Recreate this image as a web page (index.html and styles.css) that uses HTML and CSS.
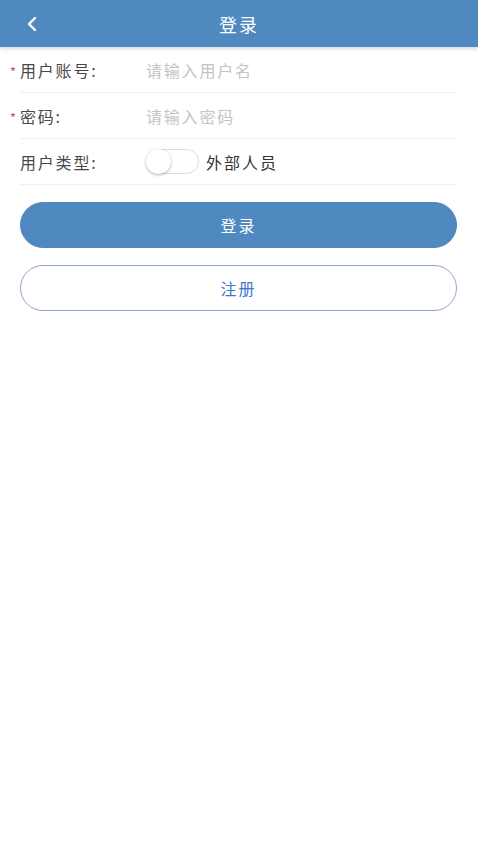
FILE: index.html
```html
<!DOCTYPE html>
<html lang="zh">
<head>
<meta charset="utf-8">
<title>登录</title>
<link rel="stylesheet" href="styles.css">
</head>
<body>
<header class="nav">
  <span class="back">
    <svg width="12" height="16" viewBox="0 0 12 16"><polyline points="9,2 3,8 9,14" fill="none" stroke="#fff" stroke-width="2.4" stroke-linecap="round" stroke-linejoin="round"/></svg>
  </span>
  <h1 class="title">登录</h1>
</header>
<main class="form">
  <div class="row">
    <label class="label"><span class="req">*</span>用户账号:</label>
    <span class="placeholder">请输入用户名</span>
  </div>
  <div class="row">
    <label class="label"><span class="req">*</span>密码:</label>
    <span class="placeholder">请输入密码</span>
  </div>
  <div class="row">
    <label class="label">用户类型:</label>
    <span class="switch"><span class="knob"></span></span>
    <span class="switch-text">外部人员</span>
  </div>
  <div class="actions">
    <button class="btn btn-primary">登录</button>
    <button class="btn btn-outline">注册</button>
  </div>
</main>
</body>
</html>
```
FILE: styles.css
```css
* { box-sizing: border-box; }
html, body { margin: 0; padding: 0; background: #fff; }
body {
  font-family: "Noto Sans CJK SC", "Noto Sans", sans-serif;
  color: #333;
}
.nav {
  height: 47px;
  background: #5088c0;
  display: flex;
  align-items: center;
  position: relative;
  box-shadow: 0 2px 4px rgba(80,110,150,0.25);
}
.back {
  width: 40px;
  padding-left: 26px;
  display: flex;
  align-items: center;
}
.title {
  flex: 1;
  margin: 0 40px 0 0;
  text-align: center;
  font-size: 18px;
  font-weight: 400;
  color: #fff;
  letter-spacing: 2px;
}
.form {
  padding: 0 21px 0 20px;
}
.row {
  height: 46px;
  display: flex;
  align-items: center;
  border-bottom: 1px solid #f0f0f0;
}
.label {
  width: 126px;
  font-size: 16px;
  color: #484848;
  letter-spacing: 1.8px;
}
.req {
  display: inline-block;
  width: 10px;
  margin-left: -10px;
  color: #e04a4a;
  font-size: 13px;
  text-align: left;
  letter-spacing: 0;
}
.placeholder {
  font-size: 16px;
  color: #c4c4c4;
  letter-spacing: 1.8px;
}
.switch {
  width: 53px;
  height: 25px;
  border: 1px solid #dcdcdc;
  border-radius: 13px;
  display: flex;
  align-items: center;
  background: #fff;
}
.knob {
  width: 25px;
  height: 25px;
  margin-left: -1px;
  border-radius: 50%;
  background: #fff;
  box-shadow: 0 1px 3px rgba(0,0,0,0.3);
}
.switch-text {
  margin-left: 7px;
  font-size: 16px;
  color: #333;
  letter-spacing: 2px;
}
.actions {
  padding-top: 17px;
  display: flex;
  flex-direction: column;
  gap: 17px;
}
.btn {
  height: 46px;
  width: 100%;
  border-radius: 23px;
  font-family: inherit;
  font-size: 16px;
  letter-spacing: 2px;
  cursor: pointer;
}
.btn-primary {
  background: #5088c0;
  color: #fff;
  border: 1px solid #5088c0;
}
.btn-outline {
  background: #fff;
  color: #3a78cf;
  border: 1.5px solid #8aa8c8;
}
```
